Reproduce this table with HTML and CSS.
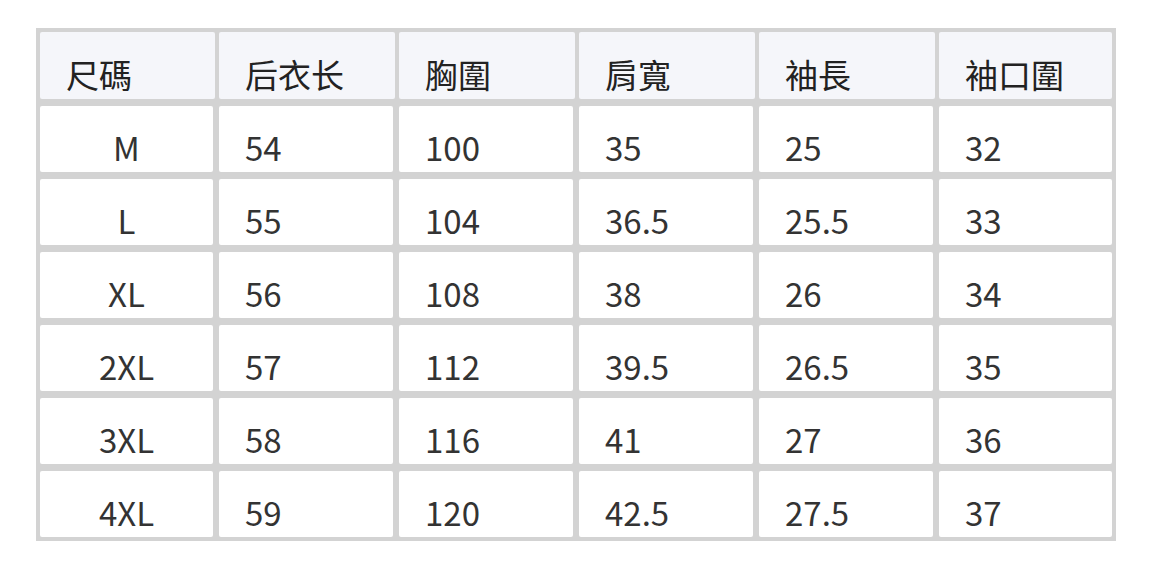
FILE: index.html
```html
<!DOCTYPE html>
<html lang="zh-Hant">
<head>
<meta charset="utf-8">
<title>尺碼表</title>
<link rel="stylesheet" href="styles.css">
</head>
<body>
<div class="size-table">
  <div class="cell head first">尺碼</div>
  <div class="cell head">后衣长</div>
  <div class="cell head">胸圍</div>
  <div class="cell head">肩寬</div>
  <div class="cell head">袖長</div>
  <div class="cell head last">袖口圍</div>

  <div class="cell size">M</div><div class="cell">54</div><div class="cell">100</div><div class="cell">35</div><div class="cell">25</div><div class="cell last">32</div>
  <div class="cell size">L</div><div class="cell">55</div><div class="cell">104</div><div class="cell">36.5</div><div class="cell">25.5</div><div class="cell last">33</div>
  <div class="cell size">XL</div><div class="cell">56</div><div class="cell">108</div><div class="cell">38</div><div class="cell">26</div><div class="cell last">34</div>
  <div class="cell size">2XL</div><div class="cell">57</div><div class="cell">112</div><div class="cell">39.5</div><div class="cell">26.5</div><div class="cell last">35</div>
  <div class="cell size">3XL</div><div class="cell">58</div><div class="cell">116</div><div class="cell">41</div><div class="cell">27</div><div class="cell last">36</div>
  <div class="cell size">4XL</div><div class="cell">59</div><div class="cell">120</div><div class="cell">42.5</div><div class="cell">27.5</div><div class="cell last">37</div>
</div>
</body>
</html>
```

FILE: styles.css
```css
html, body {
  margin: 0;
  padding: 0;
  background: #ffffff;
}

body {
  padding: 28px 36px;
  font-family: "Noto Sans CJK TC", "Noto Sans CJK SC", "Noto Sans", sans-serif;
  color: #333333;
}

.size-table {
  width: 1080px;
  box-sizing: border-box;
  display: grid;
  grid-template-columns: 175px 176px 176px 176px 176px 173px;
  grid-template-rows: 67px repeat(6, 66px);
  column-gap: 4px;
  row-gap: 7px;
  padding: 4px;
  background: #d3d3d3;
}

.cell {
  background: #ffffff;
  border-radius: 2px;
  font-size: 33px;
  font-weight: 400;
  line-height: 1;
  display: flex;
  align-items: flex-end;
  padding: 0 0 8px 26px;
  margin-right: 2px;
}

.cell.last {
  margin-right: 0;
}

.cell.head {
  background: #f5f6fa;
  color: #222222;
  margin-right: 0;
  padding-bottom: 8px;
}

.cell.size {
  justify-content: center;
  padding-left: 0;
}
```
